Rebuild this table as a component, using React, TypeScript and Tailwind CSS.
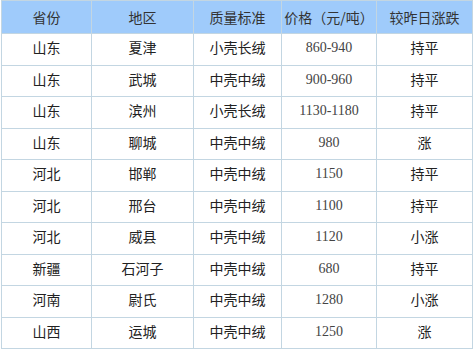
import React from "react";

const rows = [
  ["山东", "夏津", "小壳长绒", "860-940", "持平"],
  ["山东", "武城", "中壳中绒", "900-960", "持平"],
  ["山东", "滨州", "小壳长绒", "1130-1180", "持平"],
  ["山东", "聊城", "中壳中绒", "980", "涨"],
  ["河北", "邯郸", "中壳中绒", "1150", "持平"],
  ["河北", "邢台", "中壳中绒", "1100", "持平"],
  ["河北", "威县", "中壳中绒", "1120", "小涨"],
  ["新疆", "石河子", "中壳中绒", "680", "持平"],
  ["河南", "尉氏", "中壳中绒", "1280", "小涨"],
  ["山西", "运城", "中壳中绒", "1250", "涨"],
];

const cjk = "font-['SimSun','Noto_Sans_CJK_SC',sans-serif]";

export default function App() {
  return (
    <div className="w-[473px] h-[351px] bg-white pl-px overflow-hidden">
      <table className="w-[471px] border-collapse table-fixed text-[14px] text-[#222]">
        <colgroup>
          <col className="w-[90px]" />
          <col className="w-[102px]" />
          <col className="w-[88px]" />
          <col className="w-[95px]" />
          <col className="w-[96px]" />
        </colgroup>
        <thead>
          <tr className="h-[33px] bg-[#9fcbfb]">
            {["省份", "地区", "质量标准", "价格（元/吨）", "较昨日涨跌"].map((h) => (
              <th key={h} className={`border border-[#c3d6e2] font-normal text-center text-[#333] ${cjk}`}>
                {h}
              </th>
            ))}
          </tr>
        </thead>
        <tbody>
          {rows.map((r, i) => (
            <tr key={i} className="h-[31.5px]">
              {r.map((c, j) => (
                <td
                  key={j}
                  className={`border border-[#c3d6e2] text-center align-top pt-[3px] ${
                    j === 3 ? "font-['Liberation_Serif',serif] text-[#444]" : cjk
                  }`}
                >
                  {c}
                </td>
              ))}
            </tr>
          ))}
        </tbody>
      </table>
    </div>
  );
}
